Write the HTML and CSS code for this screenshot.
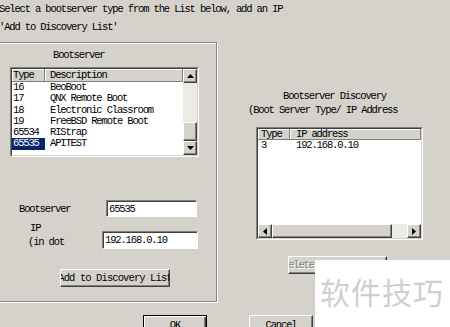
FILE: index.html
```html
<!DOCTYPE html>
<html lang="en">
  <head>
    <meta charset="UTF-8" />
    <title>Bootserver Discovery</title>
    <link rel="stylesheet" href="styles.css">
  </head>
  <body>
    <div class="dialog">
      <p class="intro">Select a bootserver type from the List below, add an IP<br>'Add to Discovery List'</p>

      <div class="main">
        <div class="group">
          <div class="group-title">Bootserver</div>
          <div class="listbox types">
            <div class="lb">
              <div class="list-body">
                <div class="list-head"><span class="c-type">Type</span><span class="c-desc">Description</span></div>
                <div class="row"><span class="c-type">16</span><span class="c-desc">BeoBoot</span></div>
                <div class="row"><span class="c-type">17</span><span class="c-desc">QNX Remote Boot</span></div>
                <div class="row"><span class="c-type">18</span><span class="c-desc">Electronic Classroom</span></div>
                <div class="row"><span class="c-type">19</span><span class="c-desc">FreeBSD Remote Boot</span></div>
                <div class="row"><span class="c-type">65534</span><span class="c-desc">RIStrap</span></div>
                <div class="row sel"><span class="c-type">65535</span><span class="c-desc">APITEST</span></div>
              </div>
              <div class="vscroll">
                <span class="sb-btn"><svg width="7" height="4" viewBox="0 0 7 4"><path d="M3.5 0L7 4H0z"/></svg></span>
                <div class="track"><span class="thumb"></span></div>
                <span class="sb-btn"><svg width="7" height="4" viewBox="0 0 7 4"><path d="M0 0h7L3.5 4z"/></svg></span>
              </div>
            </div>
          </div>

          <div class="field">
            <label class="field-label" for="bootserver">Bootserver</label>
            <input class="textbox" id="bootserver" type="text" value="65535" />
          </div>
          <div class="field ip">
            <label class="field-label" for="ip"><span class="ip-line">IP</span><br>(in dot</label>
            <input class="textbox" id="ip" type="text" value="192.168.0.10" />
          </div>

          <button class="btn add-btn">Add to Discovery List</button>
        </div>

        <div class="side">
          <div class="side-title">Bootserver Discovery</div>
          <div class="side-sub">(Boot Server Type/ IP Address</div>
          <div class="listbox discovery">
            <div class="lb column">
              <div class="list-body">
                <div class="list-head short"><span class="c-type">Type</span><span class="c-ip">IP address</span></div>
                <div class="row"><span class="c-type">3</span><span class="c-ip">192.168.0.10</span></div>
              </div>
              <div class="hscroll">
                <span class="sb-btn"><svg width="4" height="7" viewBox="0 0 4 7"><path d="M4 0v7L0 3.5z"/></svg></span>
                <div class="htrack"><span class="thumb wide"></span></div>
                <span class="sb-btn"><svg width="4" height="7" viewBox="0 0 4 7"><path d="M0 0l4 3.5L0 7z"/></svg></span>
              </div>
            </div>
          </div>
          <button class="btn delete-btn" disabled><span>Delete</span></button>
        </div>
      </div>

      <div class="actions">
        <button class="btn default ok">OK</button>
        <button class="btn cancel">Cancel</button>
      </div>

      <div class="watermark">软件技巧</div>
    </div>
  </body>
</html>
```

FILE: styles.css
```css
* {
  margin: 0;
  padding: 0;
  box-sizing: border-box;
}

body {
  background: #d5d2cb;
  font-family: "Liberation Mono", monospace;
  font-size: 10.5px;
  letter-spacing: -1.15px;
  color: #000;
  overflow: hidden;
}

.dialog {
  position: relative;
  width: 450px;
  height: 327px;
  overflow: hidden;
}

.intro {
  line-height: 18px;
  margin-left: -1px;
  white-space: nowrap;
}

.main {
  display: flex;
  margin-top: 6px;
  margin-left: -10px;
}

/* etched group frame */
.group {
  width: 227px;
  height: 260px;
  border: 1px solid #8a8882;
  box-shadow: inset 1px 1px 0 #fff, 1px 1px 0 #fff;
}

.group-title {
  padding: 6px 0 0 62px;
  line-height: 12px;
}

/* sunken list boxes */
.listbox {
  background: #fff;
  border: 1px solid;
  border-color: #808080 #fff #fff #808080;
}

.lb {
  display: flex;
  height: 100%;
  border: 1px solid;
  border-color: #404040 #d5d2cb #d5d2cb #404040;
}

.lb.column {
  flex-direction: column;
}

.types {
  margin: 6px 0 0 19px;
  width: 189px;
  height: 90px;
}

.list-body {
  flex: 1;
  overflow: hidden;
  white-space: nowrap;
}

.list-head {
  display: flex;
  height: 13px;
  line-height: 12px;
  background: #d5d2cb;
}

.list-head span {
  border-right: 1px solid #808080;
  border-bottom: 1px solid #808080;
  box-shadow: inset 1px 1px 0 #fff;
}

.list-head.short {
  height: 11px;
  line-height: 10px;
}

.row {
  display: flex;
  height: 11.3px;
  line-height: 11.3px;
}

.c-type {
  width: 33px;
  padding-left: 1px;
}

.c-desc {
  flex: 1;
  padding-left: 5px;
}

.row.sel .c-type {
  background: #0a246a;
  color: #fff;
}

.discovery .c-type {
  width: 32px;
  padding-left: 3px;
}

.c-ip {
  flex: 1;
  padding-left: 6px;
}

/* scrollbars */
.vscroll {
  width: 14px;
  display: flex;
  flex-direction: column;
  background: #eceae5;
}

.hscroll {
  height: 14px;
  display: flex;
  background: #eceae5;
}

.sb-btn,
.thumb {
  width: 14px;
  height: 14px;
  background: #d5d2cb;
  border: 1px solid;
  border-color: #fff #404040 #404040 #fff;
  box-shadow: inset -1px -1px 0 #808080;
  display: flex;
  align-items: center;
  justify-content: center;
  flex-shrink: 0;
}

.track {
  flex: 1;
  display: flex;
  flex-direction: column;
  justify-content: flex-end;
}

.track .thumb {
  height: 19px;
}

.htrack {
  flex: 1;
  display: flex;
}

.thumb.wide {
  width: 120px;
}

/* text fields */
.field {
  display: flex;
  align-items: center;
  margin-top: 43px;
  padding-left: 28px;
}

.field-label {
  width: 87px;
}

.textbox {
  width: 91px;
  height: 17px;
  border: 1px solid;
  border-color: #808080 #fff #fff #808080;
  box-shadow: inset 1px 1px 0 #404040;
  background: #fff;
  font: inherit;
  letter-spacing: inherit;
  padding-left: 2px;
  outline: none;
}

.field.ip {
  align-items: flex-end;
  margin-top: 5px;
  padding-left: 37px;
}

.field.ip .field-label {
  width: 74px;
  line-height: 13.5px;
}

.ip-line {
  padding-left: 2px;
}

.field.ip .textbox {
  width: 96px;
  height: 18px;
}

/* push buttons */
.btn {
  display: flex;
  align-items: center;
  justify-content: center;
  overflow: hidden;
  white-space: nowrap;
  height: 18px;
  background: #d5d2cb;
  border: 1px solid;
  border-color: #fff #404040 #404040 #fff;
  box-shadow: inset -1px -1px 0 #808080;
  font: inherit;
  letter-spacing: inherit;
  color: #000;
}

.add-btn {
  margin: 20px 0 0 69px;
  width: 110px;
  letter-spacing: -0.9px;
}

.side {
  flex: 1;
}

.side-title {
  margin-top: 48px;
  line-height: 13px;
  padding-left: 66px;
}

.side-sub {
  line-height: 14px;
  padding-left: 31px;
  white-space: nowrap;
}

.discovery {
  margin: 10px 0 0 39px;
  width: 167px;
  height: 113px;
}

.delete-btn {
  margin: 16px 0 0 71px;
  width: 99px;
  justify-content: flex-start;
  color: #808080;
  text-shadow: 1px 1px 0 #fff;
}

.delete-btn span {
  margin-left: -6px;
}

.actions {
  display: flex;
  margin-top: 13px;
}

.ok {
  margin-left: 143px;
  width: 64px;
  height: 19px;
}

.btn.default {
  border: 1px solid #000;
  box-shadow: inset 1px 1px 0 #fff, inset -1px -1px 0 #404040, inset -2px -2px 0 #808080;
}

.cancel {
  margin-left: 42px;
  width: 64px;
  height: 19px;
}

.watermark {
  position: absolute;
  left: 315px;
  top: 260px;
  width: 135px;
  height: 67px;
  background: #fff;
  padding: 15px 0 0 5px;
  font-family: "Noto Sans CJK SC", sans-serif;
  font-size: 30px;
  line-height: 32px;
  letter-spacing: 1px;
  color: #cfcfcf;
}
```
